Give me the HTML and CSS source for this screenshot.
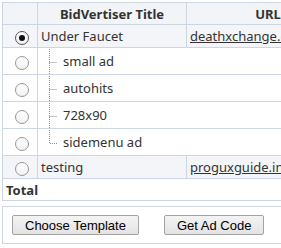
FILE: index.html
```html
<!DOCTYPE html>
<html>
<head>
    <meta charset='utf-8'>
    <title>Ad Zones</title>
    <link rel="stylesheet" href="styles.css">
</head>
<body>
    <div class="wrap">
        <table class="zones">
            <tr class="headRow">
                <th class="colPick"></th>
                <th class="colTitle">BidVertiser Title</th>
                <th class="colUrl">URL</th>
            </tr>
            <tr class="parentRow">
                <td class="colPick"><span class="radio checked"></span></td>
                <td class="colTitle">Under Faucet</td>
                <td class="colUrl"><a href="#">deathxchange.com</a></td>
            </tr>
            <tr class="childRow">
                <td class="colPick"><span class="radio"></span></td>
                <td colspan="2">
                    <div class="child">
                        <svg class="tree" width="20" height="26" viewBox="0 0 20 26"><path d="M8.5 1V26M8.5 14.5H16" stroke="#8c8c8c" stroke-dasharray="1 1" fill="none"/></svg>
                        <span>small ad</span>
                    </div>
                </td>
            </tr>
            <tr class="childRow">
                <td class="colPick"><span class="radio"></span></td>
                <td colspan="2">
                    <div class="child">
                        <svg class="tree" width="20" height="26" viewBox="0 0 20 26"><path d="M8.5 1V26M8.5 14.5H16" stroke="#8c8c8c" stroke-dasharray="1 1" fill="none"/></svg>
                        <span>autohits</span>
                    </div>
                </td>
            </tr>
            <tr class="childRow">
                <td class="colPick"><span class="radio"></span></td>
                <td colspan="2">
                    <div class="child">
                        <svg class="tree" width="20" height="26" viewBox="0 0 20 26"><path d="M8.5 1V26M8.5 14.5H16" stroke="#8c8c8c" stroke-dasharray="1 1" fill="none"/></svg>
                        <span>728x90</span>
                    </div>
                </td>
            </tr>
            <tr class="childRow">
                <td class="colPick"><span class="radio"></span></td>
                <td colspan="2">
                    <div class="child">
                        <svg class="tree" width="20" height="26" viewBox="0 0 20 26"><path d="M8.5 1V14.5H16" stroke="#8c8c8c" stroke-dasharray="1 1" fill="none"/></svg>
                        <span>sidemenu ad</span>
                    </div>
                </td>
            </tr>
            <tr class="parentRow">
                <td class="colPick"><span class="radio"></span></td>
                <td class="colTitle">testing</td>
                <td class="colUrl"><a href="#">proguxguide.info</a></td>
            </tr>
            <tr class="totalRow">
                <td colspan="3">Total</td>
            </tr>
        </table>

        <div class="actions">
            <button class="btn">Choose Template</button>
            <button class="btn">Get Ad Code</button>
        </div>
    </div>
</body>
</html>
```

FILE: styles.css
```css
body {
    margin: 0;
    overflow: hidden;
    font-family: "Noto Sans", sans-serif;
    font-size: 13px;
    color: #333;
}
.wrap {
    width: 348px;
    padding: 2px 0 0 2px;
}
.zones {
    width: 100%;
    border-collapse: collapse;
    border: 1px solid #cbd6e2;
}
.zones th,
.zones td {
    border: 1px solid #cbd6e2;
    padding: 0 3px;
    text-align: left;
    white-space: nowrap;
}
.headRow th {
    height: 21px;
    background: #f2f4f7;
    font-weight: bold;
    text-align: center;
}
.colPick {
    width: 28px;
    text-align: center !important;
}
.colTitle {
    width: 142px;
}
.parentRow td {
    height: 22px;
    background: #f3f5f8;
}
.childRow td {
    height: 26px;
    padding-top: 0;
    padding-bottom: 0;
}
.child {
    display: flex;
    align-items: center;
    gap: 2px;
}
.tree {
    display: block;
}
.totalRow td {
    height: 21px;
    font-weight: bold;
}
.zones a {
    color: #333;
}
.radio {
    display: inline-block;
    width: 12px;
    height: 12px;
    border: 1px solid #979797;
    border-radius: 50%;
    background: linear-gradient(#fff, #f2f2f2);
    vertical-align: middle;
    position: relative;
    left: 2px;
}
.radio.checked {
    border-color: #555;
}
.radio.checked::after {
    content: "";
    position: absolute;
    left: 3px;
    top: 3px;
    width: 6px;
    height: 6px;
    border-radius: 50%;
    background: #111;
}
.actions {
    margin-top: 5px;
    border: 1px solid #cbd6e2;
    padding: 8px 9px 8px;
    display: flex;
    gap: 25px;
}
.btn {
    font-family: "Liberation Sans", Arial, sans-serif;
    font-size: 13px;
    color: #000;
    height: 20px;
    padding: 0 12px;
    border: 1px solid #a3a3a3;
    border-radius: 2px;
    background: linear-gradient(#f4f4f4, #e3e3e3);
}
```
